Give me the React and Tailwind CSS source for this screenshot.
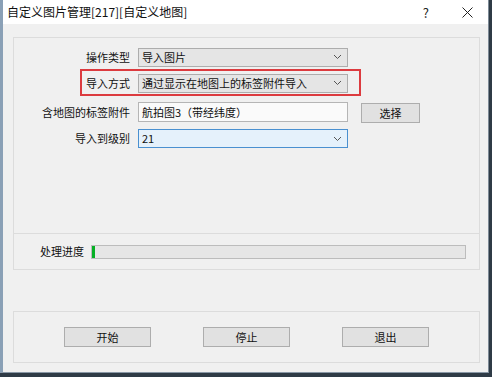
import React from 'react';

const font = { fontFamily: '"Noto Sans CJK SC", "Microsoft YaHei", sans-serif' };

function Chevron() {
  return (
    <svg width="9" height="6" viewBox="0 0 9 6" className="shrink-0">
      <path d="M1 1 L4.5 4.5 L8 1" fill="none" stroke="#555" strokeWidth="1" />
    </svg>
  );
}

function Combo({ value, focused }) {
  return (
    <div
      className={`flex items-center justify-between w-[210px] h-[19px] pl-[3px] pr-[5px] border ${
        focused ? 'bg-[#e5f1fb] border-[#4a90d0]' : 'bg-[#e5e5e5] border-[#adadad]'
      }`}
    >
      <span className="text-[11px] leading-none text-[#111]">{value}</span>
      <Chevron />
    </div>
  );
}

function Label({ children }) {
  return (
    <div className="w-[117px] shrink-0 text-right pr-[1px] text-[11px] leading-none text-[#111]">
      {children}
    </div>
  );
}

function Button({ children, className = '' }) {
  return (
    <div
      className={`flex items-center justify-center h-[20px] bg-[#e1e1e1] border border-[#adadad] text-[11px] leading-none text-[#111] ${className}`}
    >
      {children}
    </div>
  );
}

export default function App() {
  return (
    <div className="w-[492px] h-[377px] bg-[#2f3b46] overflow-hidden" style={font}>
      <div className="w-[489px] h-[373px] bg-[#f0f0f0] border-l-[3px] border-[#8aa0b6] border-r border-r-[#7d8a96] border-b border-b-[#8a98a6] flex flex-col">
        {/* Title bar */}
        <div className="h-[24px] bg-white flex items-center pl-[4px] shrink-0">
          <span className="text-[12px] leading-none text-[#111]">自定义图片管理[217][自定义地图]</span>
          <span className="ml-auto text-[13px] leading-none text-[#222] mr-[33px]">?</span>
          <svg width="11" height="11" viewBox="0 0 11 11" className="mr-[15px]">
            <path d="M0.5 0.5 L10.5 10.5 M10.5 0.5 L0.5 10.5" stroke="#222" strokeWidth="1" />
          </svg>
        </div>

        <div className="pl-[10px] pt-[13px]">
          {/* Settings group */}
          <div className="w-[467px] h-[197px] border border-[#dcdcdc] pt-[10px]">
            <div className="flex items-center h-[18px]">
              <Label>操作类型</Label>
              <div className="ml-[7px]">
                <Combo value="导入图片" />
              </div>
            </div>

            <div className="relative flex items-center h-[18px] mt-[8px]">
              <Label>导入方式</Label>
              <div className="ml-[7px]">
                <Combo value="通过显示在地图上的标签附件导入" />
              </div>
              <div className="absolute left-[66px] top-[-5px] w-[281px] h-[27px] border-2 border-[#dc3b3f]" />
            </div>

            <div className="flex items-center h-[20px] mt-[10px]">
              <Label>含地图的标签附件</Label>
              <div className="ml-[7px] w-[210px] h-[20px] flex items-center pl-[3px] bg-[#fafafa] border border-[#b5b5b5] text-[11px] leading-none text-[#111]">
                航拍图3（带经纬度）
              </div>
              <Button className="w-[59px] ml-[13px] mt-[2px] h-[19px]">选择</Button>
            </div>

            <div className="flex items-center h-[19px] mt-[7px]">
              <Label>导入到级别</Label>
              <div className="ml-[7px]">
                <Combo value="21" focused />
              </div>
            </div>
          </div>

          {/* Progress group */}
          <div className="w-[467px] h-[36px] border border-t-0 border-[#dcdcdc] flex items-center">
            <div className="w-[70px] text-right text-[11px] leading-none text-[#111]">处理进度</div>
            <div className="ml-[7px] w-[375px] h-[14px] bg-[#e6e6e6] border border-[#bcbcbc] flex">
              <div className="w-[3px] h-full bg-[#06b025]" />
            </div>
          </div>

          {/* Button group */}
          <div className="mt-[41px] w-[467px] h-[52px] border border-[#dcdcdc] flex items-center pl-[50px] gap-[52px]">
            <Button className="w-[87px]">开始</Button>
            <Button className="w-[87px]">停止</Button>
            <Button className="w-[87px]">退出</Button>
          </div>
        </div>
      </div>
    </div>
  );
}
